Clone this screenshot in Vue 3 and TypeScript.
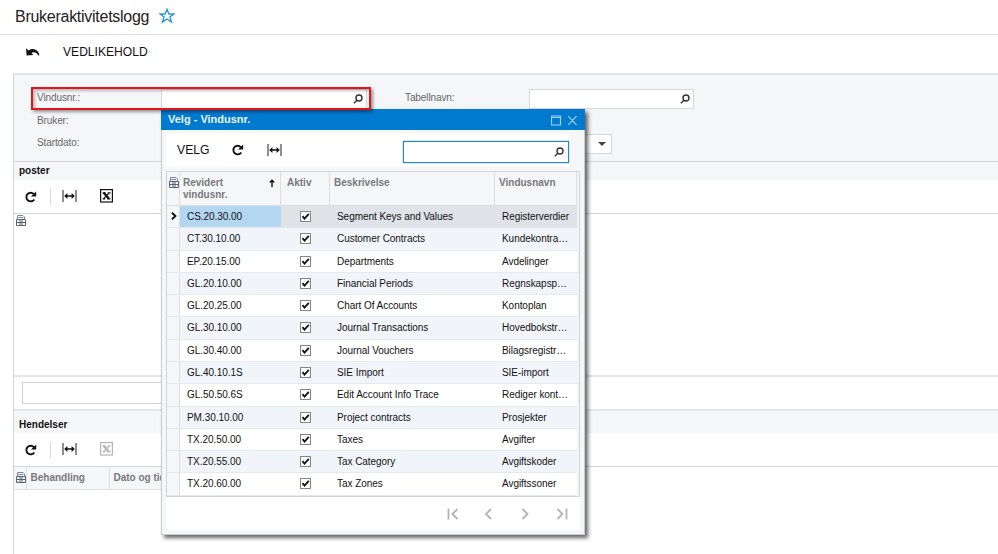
<template>
  <div class="page">
    <header class="page-title">
      <h1>Brukeraktivitetslogg</h1>
      <svg class="star" viewBox="0 0 16 16">
        <path d="M8 1.3L9.9 6H14.8L10.9 9L12.4 14L8 11L3.6 14L5.1 9L1.2 6H6.1Z" />
      </svg>
    </header>

    <nav class="page-toolbar">
      <svg class="undo" viewBox="0 0 14 10">
        <path d="M0 1.2L0.6 8.4L7.4 7.9L5.4 5.9C7.6 4.4 10.6 5.2 12.6 8.6L13.4 8.2C12.4 2.6 6.6 0.4 2.6 3.4Z" />
      </svg>
      <span>VEDLIKEHOLD</span>
    </nav>

    <main class="content">
      <section class="form">
        <div class="form-row">
          <label>Vindusnr.:</label>
          <div class="field">
            <svg class="search" viewBox="0 0 10 10"><circle cx="6" cy="4" r="3" /><path d="M4 6.2L0.8 9.2" /></svg>
          </div>
          <label class="second">Tabellnavn:</label>
          <div class="field table-name">
            <svg class="search" viewBox="0 0 10 10"><circle cx="6" cy="4" r="3" /><path d="M4 6.2L0.8 9.2" /></svg>
          </div>
        </div>
        <div class="form-row">
          <label>Bruker:</label>
        </div>
        <div class="form-row">
          <label>Startdato:</label>
          <div class="field"></div>
          <label class="second"></label>
          <div class="field date"><i class="caret"></i></div>
        </div>
      </section>

      <template v-for="panel in panels" :key="panel.title">
        <h2 :class="{ tall: panel.columns.length }">{{ panel.title }}</h2>
        <div class="panel-toolbar">
          <svg class="refresh" viewBox="0 0 12 12">
            <path class="arc" d="M8.8 3.1A4.3 4.3 0 1 0 9.3 8.4" />
            <path d="M11.2 0.4V5.6H6Z" />
          </svg>
          <i class="divider"></i>
          <svg class="fit" viewBox="0 0 15 13">
            <path class="line" d="M1 0V12M14 0V12" />
            <path d="M2.2 6L5.4 2.9V5.2H9.6V2.9L12.8 6L9.6 9.1V6.8H5.4V9.1Z" />
          </svg>
          <svg class="excel" :class="{ disabled: panel.columns.length }" viewBox="0 0 13 14">
            <rect x="0.6" y="0.6" width="11.8" height="12.4" />
            <path class="thick" d="M3.7 3.8L9 9.8" />
            <path class="thin" d="M9.5 3.6L3.5 9.9M2.6 3.8H5.6M7.8 3.8H10.6M2.6 9.9H5.2M7.2 9.9H10.4" />
          </svg>
        </div>
        <div v-if="panel.columns.length" class="panel-columns">
          <div class="settings-cell">
            <svg class="settings" viewBox="0 0 10 11">
              <path class="sheet" d="M1.5 4.5V0.5H7L8.5 2V4.5M2.5 2.5H7" />
              <path d="M0.5 4.5H9.5V10.5H0.5ZM0.5 7.5H9.5M3 6H7M3 9H7" />
            </svg>
          </div>
          <div v-for="column in panel.columns" :key="column" class="panel-column">{{ column }}</div>
        </div>
        <template v-else>
          <div class="empty-list">
            <svg class="settings" viewBox="0 0 10 11">
              <path class="sheet" d="M1.5 4.5V0.5H7L8.5 2V4.5M2.5 2.5H7" />
              <path d="M0.5 4.5H9.5V10.5H0.5ZM0.5 7.5H9.5M3 6H7M3 9H7" />
            </svg>
          </div>
          <div class="list-filter"><div class="filter-input"></div></div>
        </template>
      </template>
    </main>

    <div class="dialog">
      <div class="dialog-title">
        <span>Velg - Vindusnr.</span>
        <svg viewBox="0 0 26 11">
          <path d="M0.5 1H9.5V10H0.5ZM0.5 2.5H9.5M17.3 1.2L25.5 9.8M25.5 1.2L17.3 9.8" />
        </svg>
      </div>
      <div class="dialog-toolbar">
        <span>VELG</span>
        <svg class="refresh" viewBox="0 0 12 12">
          <path class="arc" d="M8.8 3.1A4.3 4.3 0 1 0 9.3 8.4" />
          <path d="M11.2 0.4V5.6H6Z" />
        </svg>
        <svg class="fit" viewBox="0 0 15 13">
          <path class="line" d="M1 0V12M14 0V12" />
          <path d="M2.2 6L5.4 2.9V5.2H9.6V2.9L12.8 6L9.6 9.1V6.8H5.4V9.1Z" />
        </svg>
        <div class="dialog-search">
          <svg class="search" viewBox="0 0 10 10"><circle cx="6" cy="4" r="3" /><path d="M4 6.2L0.8 9.2" /></svg>
        </div>
      </div>
      <div class="grid">
        <div class="grid-head">
          <div class="settings-cell">
            <svg class="settings" viewBox="0 0 10 11">
              <path class="sheet" d="M1.5 4.5V0.5H7L8.5 2V4.5M2.5 2.5H7" />
              <path d="M0.5 4.5H9.5V10.5H0.5ZM0.5 7.5H9.5M3 6H7M3 9H7" />
            </svg>
          </div>
          <div class="sorted">
            <span>Revidert vindusnr.</span>
            <svg class="sort" viewBox="0 0 6 8"><path d="M3 8V1M0.8 3.4L3 1.2L5.2 3.4" /></svg>
          </div>
          <div class="active-head">Aktiv</div>
          <div>Beskrivelse</div>
          <div>Vindusnavn</div>
        </div>
        <div v-for="(row, i) in rows" :key="row.id" class="grid-row" :class="{ selected: i === 0 }">
          <div class="marker">
            <svg v-if="i === 0" viewBox="0 0 6 8"><path d="M1 0.8L4.4 4L1 7.2" /></svg>
          </div>
          <div class="id">{{ row.id }}</div>
          <div class="check">
            <svg viewBox="0 0 11 11">
              <rect x="0.5" y="0.5" width="10" height="10" />
              <path d="M2.5 5.2L4.5 7.6L8.8 2.8" />
            </svg>
          </div>
          <div class="text">{{ row.description }}</div>
          <div class="text">{{ row.name }}</div>
        </div>
      </div>
      <div class="pager">
        <svg v-for="d in pagerIcons" :key="d" viewBox="0 0 12 12"><path :d="d" /></svg>
      </div>
    </div>

    <div class="highlight"></div>
  </div>
</template>

<script setup lang="ts">
interface Row {
  id: string
  description: string
  name: string
}

interface Panel {
  title: string
  columns: string[]
}

const panels: Panel[] = [
  { title: 'poster', columns: [] },
  { title: 'Hendelser', columns: ['Behandling', 'Dato og tid'] }
]

const rows: Row[] = [
  { id: 'CS.20.30.00', description: 'Segment Keys and Values', name: 'Registerverdier' },
  { id: 'CT.30.10.00', description: 'Customer Contracts', name: 'Kundekontra…' },
  { id: 'EP.20.15.00', description: 'Departments', name: 'Avdelinger' },
  { id: 'GL.20.10.00', description: 'Financial Periods', name: 'Regnskapsp…' },
  { id: 'GL.20.25.00', description: 'Chart Of Accounts', name: 'Kontoplan' },
  { id: 'GL.30.10.00', description: 'Journal Transactions', name: 'Hovedbokstr…' },
  { id: 'GL.30.40.00', description: 'Journal Vouchers', name: 'Bilagsregistr…' },
  { id: 'GL.40.10.1S', description: 'SIE Import', name: 'SIE-import' },
  { id: 'GL.50.50.6S', description: 'Edit Account Info Trace', name: 'Rediger kont…' },
  { id: 'PM.30.10.00', description: 'Project contracts', name: 'Prosjekter' },
  { id: 'TX.20.50.00', description: 'Taxes', name: 'Avgifter' },
  { id: 'TX.20.55.00', description: 'Tax Category', name: 'Avgiftskoder' },
  { id: 'TX.20.60.00', description: 'Tax Zones', name: 'Avgiftssoner' }
]

// first, previous, next, last
const pagerIcons: string[] = [
  'M1.5 0.5V11.5M10.5 1L5.5 6L10.5 11',
  'M8 1L3 6L8 11',
  'M2.5 1L7.5 6L2.5 11',
  'M1.5 1L6.5 6L1.5 11M10.5 0.5V11.5'
]
</script>

<style>
body {
  margin: 0;
  overflow: hidden;
}
</style>

<style scoped>
.page {
  position: relative;
  display: flex;
  flex-direction: column;
  width: 998px;
  height: 554px;
  overflow: hidden;
  background: #fff;
  color: #111;
  font: 10px/12px "Liberation Sans", Arial, sans-serif;
}

.page * {
  box-sizing: border-box;
}

svg {
  display: block;
  flex: none;
  fill: none;
  stroke: #111;
}

.page-title {
  display: flex;
  flex: none;
  align-items: center;
  gap: 10px;
  height: 35px;
  padding-left: 15px;
  border-bottom: 1px solid #d9dbdd;
}

h1 {
  margin: 0;
  color: #222;
  font-size: 16px;
  font-weight: 400;
  letter-spacing: -0.27px;
  line-height: 20px;
}

.star {
  width: 16px;
  height: 16px;
  margin-top: -3px;
  stroke: #2a96dc;
  stroke-width: 1.4;
}

.page-toolbar {
  display: flex;
  flex: none;
  align-items: center;
  gap: 23px;
  height: 38px;
  padding: 0 0 4px 26px;
  font-size: 12.1px;
}

.undo {
  width: 14px;
  height: 10px;
  fill: #111;
  stroke: none;
}

.content {
  flex: 1;
  margin-left: 13px;
  border-top: 2px solid #e1e3e5;
  border-left: 1px solid #d4d7da;
}

.form {
  height: 87px;
  padding: 14px 0 0 23px;
  background: #f5f6f8;
  border-bottom: 1px solid #d4d7da;
}

.form-row {
  display: flex;
  align-items: flex-start;
  height: 22.5px;
}

label {
  width: 124px;
  color: #65686b;
  letter-spacing: -0.1px;
  line-height: 18px;
}

label.second {
  margin-left: 38px;
}

.field {
  display: flex;
  align-items: center;
  justify-content: flex-end;
  width: 206px;
  height: 20px;
  padding-right: 3px;
  background: #fff;
  border: 1px solid #d5d8db;
}

.field.table-name {
  width: 165px;
}

.field.date {
  width: 83px;
  padding-right: 5px;
}

.search {
  width: 10px;
  height: 10px;
  stroke: #333;
  stroke-width: 1.4;
}

.caret {
  border: 4px solid transparent;
  border-top-color: #444;
  border-bottom: 0;
}

h2 {
  height: 18px;
  margin: 0;
  padding-left: 5px;
  background: #f5f6f8;
  font-size: 10px;
  line-height: 18px;
}

h2.tall {
  height: 22px;
  line-height: 27px;
}

.panel-toolbar {
  display: flex;
  align-items: center;
  height: 34px;
  padding-left: 11px;
  border-bottom: 1px solid #d4d7da;
}

.refresh {
  width: 12px;
  height: 12px;
  fill: #111;
  stroke: none;
}

.refresh .arc {
  fill: none;
  stroke: #111;
  stroke-width: 1.9;
}

.divider {
  width: 1px;
  height: 17px;
  margin: 0 11px 0 13px;
  background: #d8dadc;
}

.fit {
  width: 15px;
  height: 13px;
  fill: #111;
  stroke: none;
}

.fit .line {
  stroke: #333;
  stroke-width: 1.1;
}

.excel {
  width: 13px;
  height: 14px;
  margin: -1px 0 0 23px;
  stroke-width: 1.2;
}

.excel .thick {
  stroke-width: 2.4;
}

.excel.disabled {
  stroke: #b5b5b5;
}

.settings {
  width: 10px;
  height: 11px;
  stroke: #566478;
}

.settings .sheet {
  stroke: #7d8896;
}

.empty-list {
  height: 163px;
  padding: 1px 0 0 2px;
  border-bottom: 2px solid #e4e6e8;
}

.list-filter {
  height: 34px;
  padding: 5px 8px 0;
  border-bottom: 2px solid #e4e6e8;
}

.filter-input {
  width: 500px;
  height: 22px;
  border: 1px solid #d0d3d6;
}

.panel-columns {
  display: flex;
  width: 400px;
  height: 23px;
  background: #f5f6f8;
  border-bottom: 1px solid #e0e2e4;
  color: #77797c;
  font-weight: 700;
  line-height: 22px;
}

.settings-cell {
  width: 13px;
  padding: 5px 0 0 2px;
  border-right: 1px solid #dcdfe2;
}

.panel-column {
  width: 83px;
  padding-left: 3.5px;
  border-right: 1px solid #dcdfe2;
  white-space: nowrap;
}

.dialog {
  position: absolute;
  top: 109px;
  left: 161px;
  width: 424px;
  height: 426px;
  padding: 0 4px;
  background: #f5f6f8;
  border: 1px solid #c9cdd1;
  border-top: 0;
  box-shadow: 3px 3px 4px rgba(0, 0, 0, 0.6);
}

.dialog-title {
  display: flex;
  align-items: center;
  justify-content: space-between;
  height: 21px;
  margin: 0 -5px;
  padding: 0 8px 2px 7px;
  background: #007acf;
  color: #e8f3fc;
  font-size: 11px;
  font-weight: 700;
}

.dialog-title svg {
  width: 26px;
  height: 11px;
  margin-top: 4px;
  stroke: #a3d0f0;
  stroke-width: 1.2;
}

.dialog-toolbar {
  display: flex;
  align-items: center;
  width: 404px;
  height: 33px;
  margin-top: 4px;
  padding: 0 1px 1px 11px;
  background: #fff;
  font-size: 12.2px;
}

.dialog-toolbar .refresh {
  margin-left: 22px;
}

.dialog-toolbar .fit {
  margin-left: 23.5px;
}

.dialog-search {
  display: flex;
  align-items: center;
  justify-content: flex-end;
  width: 166px;
  height: 22px;
  margin: 4px 0 0 auto;
  padding-right: 4px;
  background: #fff;
  border: 1px solid #1e84d2;
  box-shadow: 0 0 1px #1e84d2;
}

.grid {
  width: 414px;
  height: 326px;
  margin-top: 4px;
  padding-right: 2px;
  background: #f1f3f5;
  border: 1px solid #d2d5d8;
}

.grid-head,
.grid-row {
  display: grid;
  grid-template-columns: 13px 101px 49px 165px 1fr;
}

.grid-head {
  height: 34px;
  background: #f5f6f8;
  border-bottom: 1px solid #dcdfe2;
  color: #77797c;
  font-weight: 700;
}

.grid-head > div {
  padding: 5px 0 0 4px;
  border-right: 1px solid #dcdfe2;
}

.grid-head > .settings-cell {
  padding-left: 2px;
}

.grid-head > .active-head {
  padding-left: 6px;
}

.grid-head > .sorted {
  display: flex;
  justify-content: space-between;
  padding-left: 3px;
}

.sorted span {
  width: 50px;
}

.sort {
  width: 6px;
  height: 8px;
  margin: 2px 5px 0 0;
  stroke-width: 1.4;
}

.grid-row {
  height: 22.29px;
  background: #fff;
  border-bottom: 1px solid #e5e9ed;
  letter-spacing: -0.05px;
  line-height: 21px;
  white-space: nowrap;
}

.grid-row:nth-child(odd) {
  background: #f1f5fa;
}

.grid-row.selected {
  background: #dfe3e8;
}

.marker {
  background: #f5f6f8;
  border-right: 1px solid #dcdfe2;
}

.marker svg {
  width: 6px;
  height: 8px;
  margin: 6px 0 0 4px;
  stroke-width: 1.9;
}

.id {
  padding-left: 7px;
}

.selected .id {
  background: #b3d7f0;
}

.check svg {
  width: 11px;
  height: 11px;
  margin: 5px 0 0 19px;
  fill: #fff;
  stroke: #858585;
}

.check path {
  fill: none;
  stroke: #111;
  stroke-width: 1.8;
}

.text {
  padding-left: 7px;
}

.pager {
  display: flex;
  align-items: center;
  justify-content: flex-end;
  gap: 24.5px;
  width: 414px;
  height: 33px;
  padding-right: 12px;
  background: #fff;
}

.pager svg {
  width: 12px;
  height: 12px;
  stroke: #b3b3b3;
  stroke-width: 1.8;
}

.highlight {
  position: absolute;
  top: 87px;
  left: 31px;
  width: 340px;
  height: 23px;
  border: 2px solid #e3151b;
  box-shadow: 2px 2px 3px rgba(0, 0, 0, 0.4), inset 2px 2px 3px rgba(0, 0, 0, 0.25);
}
</style>
